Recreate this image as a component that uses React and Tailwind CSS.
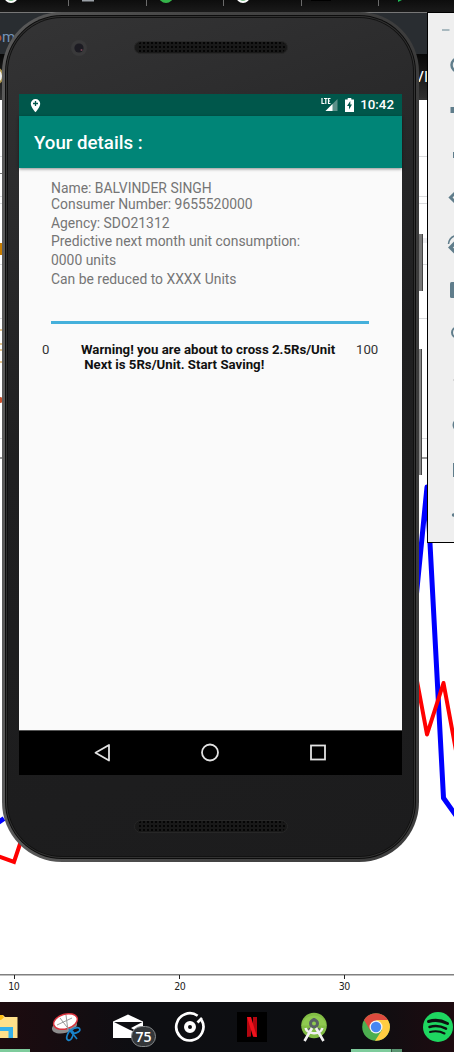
import React from "react";

function BrowserTabs() {
  return (
    <div className="h-[13px] shrink-0 bg-linear-to-b from-[#0d0d0d] to-[#1b1b1b]">
      <svg width="454" height="13" viewBox="0 0 454 13" className="block">
        <circle cx="11" cy="-4" r="7" fill="#fff" />
        <circle cx="11" cy="-4" r="5" fill="#7cc08a" />
        <rect x="82" y="0" width="12" height="1.5" fill="#9aa0a6" />
        <circle cx="166" cy="-4.500" r="7.500" fill="#35b44a" />
        <circle cx="243" cy="-4" r="7" fill="#fff" />
        <circle cx="243" cy="-4" r="5" fill="#7cc08a" />
        <rect x="311" y="0" width="20" height="1" fill="#000" />
        <path d="M398 0h4l-4 2z" fill="#1db954" />
        <path d="M68.500 0v6M146.500 0v6M223.500 0v6M301.500 0v6M378.500 0v6" stroke="#6b6b6b" />
        <path d="M0 12.500H454" stroke="#777" />
      </svg>
    </div>
  );
}

function ChartArea() {
  return (
    <svg width="454" height="902" viewBox="0 100 454 902" className="block shrink-0 bg-white">
      <g fill="none">
        <path d="M0 156.500H454M0 196.500H454M0 203.500H454M0 318.500H454M0 438.500H454M0 264.500H454" stroke="#d9dadc" />
        <path d="M0 173.500H3" stroke="#777" />
        <path d="M420 240.500h8" stroke="#ededf0" strokeWidth="5" />
        <path d="M0 458H454" stroke="#777" strokeWidth="1.500" />
        <path d="M-10 828L4 818.500" stroke="#00f" strokeWidth="5" />
        <path d="M-8 854L14 862L22 838" stroke="#f00" strokeWidth="4" />
        <path d="M410 660L427 487L443.500 798L462 824" stroke="#00f" strokeWidth="5" strokeLinejoin="round" />
        <path d="M412 654L427 734.500L443.500 683L462 783" stroke="#f00" strokeWidth="4" strokeLinejoin="round" />
        <path d="M0 974.700H454" stroke="#808080" strokeWidth="1.600" />
        <path d="M14.500 975V979M179.500 975V979M344.500 975V979" stroke="#222" />
      </g>
      <rect x="0" y="243" width="3" height="12" fill="#c77c00" />
      <path d="M0 330h2M0 344h2M0 350h2M0 362h2" stroke="#c98b20" />
      <circle cx="0" cy="400" r="3" fill="#c7502e" />
      <g fontFamily="DejaVu Sans Condensed, DejaVu Sans, sans-serif" fontSize="10.500" fill="#222" textAnchor="middle">
        <text x="14" y="990" textLength="11.500">10</text>
        <text x="180" y="990" textLength="11.500">20</text>
        <text x="344.500" y="990" textLength="11.500">30</text>
      </g>
    </svg>
  );
}

function Taskbar() {
  return (
    <svg width="454" height="50" viewBox="0 1002 454 50" className="block shrink-0">
      <defs>
        <linearGradient id="task">
          <stop offset="0" stopColor="#1d0b0f" />
          <stop offset=".3" stopColor="#0d0e12" />
          <stop offset=".8" stopColor="#0d0e11" />
          <stop offset="1" stopColor="#1e0b10" />
        </linearGradient>
      </defs>
      <rect y="1002" width="454" height="50" fill="url(#task)" />
      <rect y="1049" width="30" height="3" fill="#7ecb9c" />
      <rect x="351" y="1049" width="40" height="3" fill="#7ecb9c" />
      <rect x="391.500" y="1049" width="10.500" height="3" fill="#5a9572" />

      <path d="M-4 1015H3L5 1017H17.500V1038H-4Z" fill="#ffe08a" />
      <path d="M-2 1015H2.500L4 1017.500L1 1020H-2Z" fill="#fbbd14" />
      <path d="M-4 1027H13V1038H8.500V1031H-4Z" fill="#35b1ea" />

      <g>
        <ellipse cx="64.500" cy="1026.500" rx="12.800" ry="6.500" transform="rotate(-14 64.500 1026.500)" fill="#8d8d8d" />
        <ellipse cx="65.500" cy="1021.500" rx="12.200" ry="7.300" transform="rotate(-17 65.500 1021.500)" fill="#fff" stroke="#d8323c" strokeWidth="1.500" />
        <path d="M60 1018L70 1031M66 1015L68 1031M57 1025L72 1018" stroke="#999" strokeWidth="1" />
        <ellipse cx="75.500" cy="1030.500" rx="4.500" ry="2.500" transform="rotate(-18 75.500 1030.500)" fill="none" stroke="#1983ca" strokeWidth="1.700" />
        <ellipse cx="70" cy="1035.500" rx="2.700" ry="5" transform="rotate(22 70 1035.500)" fill="none" stroke="#1983ca" strokeWidth="1.700" />
        <path d="M69 1029L77 1039" stroke="#1983ca" strokeWidth="1.600" />
      </g>

      <path d="M113 1021.500L128 1014.500L143 1021.500V1038H113Z" fill="#fff" />
      <path d="M114 1022H142.500L131 1028L141 1034L130 1030Z" fill="#0d0e12" />
      <rect x="131.500" y="1026.500" width="24" height="20" rx="10" fill="#34373a" stroke="#85898b" />
      <text x="143.500" y="1041.500" fill="#fff" fontFamily="Open Sans, sans-serif" fontWeight="600" fontSize="14" textAnchor="middle">75</text>

      <g fill="none" stroke="#fff">
        <path d="M200.500 1018.500A13.600 13.600 0 1 1 196 1014.800" strokeWidth="2.700" transform="rotate(8 190 1027)" />
        <circle cx="190" cy="1027" r="4" strokeWidth="4" />
        <path d="M197.500 1022.500L202 1018" strokeWidth="2.600" />
      </g>

      <rect x="237" y="1012" width="30" height="30" fill="#000" />
      <path d="M247 1017H251V1036.500L247 1037ZM253 1017H257V1037L253 1036.500Z" fill="#b1060f" />
      <path d="M247 1017H251L257 1037L253 1036.500Z" fill="#f0121d" />

      <circle cx="314" cy="1025.500" r="12.800" fill="#82bd45" />
      <path d="M301.500 1025.500A12.800 12.800 0 0 1 326.500 1025.500Z" fill="#8fca50" />
      <circle cx="314" cy="1023.500" r="3.500" fill="none" stroke="#596165" strokeWidth="3" />
      <path d="M314 1018V1021M310 1028L308 1033M318 1028L320 1033" stroke="#596165" strokeWidth="2.500" />
      <path d="M312 1028L304.500 1041M316 1028L323.500 1041" stroke="#f2f2f2" strokeWidth="2.600" />
      <path d="M305.500 1028C307 1034 320 1036 322.500 1028" fill="none" stroke="#f2f2f2" strokeWidth="2.400" />

      <circle cx="376" cy="1027" r="13.800" fill="#4caf50" />
      <path d="M376 1027L364.050 1020.100A13.800 13.800 0 0 1 387.950 1020.100Z" fill="#dd4b3e" />
      <path d="M364.050 1020.100L370 1030L376 1020.100Z" fill="#dd4b3e" />
      <path d="M376 1020.100H387.950A13.800 13.800 0 0 1 375 1040.800L382 1030Z" fill="#ffcd42" />
      <circle cx="376" cy="1027" r="6.500" fill="#f5f5f5" />
      <circle cx="376" cy="1027" r="5.200" fill="#4587f3" />

      <circle cx="438" cy="1027" r="15" fill="#1ed760" />
      <g fill="none" stroke="#0d1110" strokeLinecap="round">
        <path d="M428.500 1021.500Q438 1018.500 447.500 1023.500" strokeWidth="3" />
        <path d="M429.500 1027Q438 1024.500 446 1028.700" strokeWidth="2.500" />
        <path d="M430 1032Q438 1030 444.500 1033.500" strokeWidth="2" />
      </g>
    </svg>
  );
}

function Speaker() {
  return (
    <svg width="154" height="13" viewBox="0 0 154 13" className="block shrink-0">
      <defs>
        <pattern id="mesh" width="4" height="4" patternUnits="userSpaceOnUse">
          <rect width="2" height="2" x="1" y="1" fill="#050505" />
        </pattern>
      </defs>
      <rect x=".5" y=".5" width="153" height="12" rx="6" fill="#191919" stroke="#272727" />
      <rect x="3" y="1" width="148" height="11" rx="5" fill="url(#mesh)" />
    </svg>
  );
}

function StatusBar() {
  return (
    <div className="flex h-[22px] shrink-0 items-center justify-between bg-[#00574b] pr-[8px] pl-[11px]">
      <svg width="11" height="15" viewBox="0 0 11 15">
        <path d="M5.500 1A4.700 4.700 0 0 0 .8 5.700C.8 9 5.500 14.200 5.500 14.200S10.200 9 10.200 5.700A4.700 4.700 0 0 0 5.500 1Z" fill="#fff" />
        <path d="M5.500 3V8M3 5.500H8" stroke="#00574b" strokeWidth="1.300" />
      </svg>
      <div className="flex items-center">
        <svg width="17" height="14" viewBox="0 0 17 14" className="mr-[7px]">
          <path d="M16.500 1V13H4.500Z" fill="#5c918a" />
          <path d="M11.500 6V13H4.500Z" fill="#fff" />
          <path d="M1 0V5.500H3.500M3 .5H6.500M4.800 .5V6M9.500 .5H7.500V5.500H9.500M7.500 3H9" stroke="#fff" strokeWidth="1.200" fill="none" />
        </svg>
        <svg width="9" height="14" viewBox="0 0 9 14" className="mr-[6px]">
          <path d="M2.700 0H6.300V1.500H9V14H0V1.500H2.700Z" fill="#fff" />
          <path d="M5.300 3L2 8H4V11.500L7 6.500H5.300Z" fill="#00574b" />
        </svg>
        <span className="text-[13.300px] leading-[22px] font-medium text-white">10:42</span>
      </div>
    </div>
  );
}

function AppScreen() {
  return (
    <div className="flex h-[681px] w-[383px] flex-col bg-[#fafafa] font-[Roboto,sans-serif]">
      <StatusBar />
      <div className="z-10 flex h-[52px] shrink-0 items-center bg-[#008577] pt-[2px] pl-[15px] shadow-[0_1px_3px_rgba(0,0,0,0.45)]">
        <h1 className="text-[18.700px] font-medium whitespace-pre text-white">Your details :</h1>
      </div>
      <div className="flex flex-col pt-[11px] pl-[32px] text-[13.900px] leading-[19px] whitespace-pre text-[#757575]">
        <div className="h-[16px] leading-[18px]">Name: BALVINDER SINGH</div>
        <div className="h-[19px] leading-[18px]">Consumer Number: 9655520000</div>
        <div className="h-[18px]">Agency: SDO21312</div>
        <div>Predictive next month unit consumption:</div>
        <div>0000 units</div>
        <div className="h-[18px]">Can be reduced to XXXX Units</div>
      </div>
      <div className="mt-[33px] ml-[32px] h-[3px] w-[318px] bg-[#45b0db]" />
      <div className="mt-[18px] flex h-8 text-[13.200px] leading-[15px] whitespace-pre text-[#333]">
        <div className="w-[39px] pl-[23px]">0</div>
        <div className="w-[298px] pl-[23px] text-[13.220px] font-bold text-[#111]">
          <div>Warning! you are about to cross 2.5Rs/Unit</div>
          <div> Next is 5Rs/Unit. Start Saving!</div>
        </div>
        <div>100</div>
      </div>
      <div className="grow" />
      <div className="h-[45px] shrink-0 border-t border-[#555] bg-black">
        <svg width="383" height="44" viewBox="0 0 383 44" className="block" fill="none" stroke="#e2e2e2" strokeWidth="1.800">
          <path d="M90 14V29.500L76.500 21.800Z" strokeLinejoin="round" />
          <circle cx="191" cy="21.500" r="8" />
          <rect x="292" y="14.500" width="14" height="14" />
        </svg>
      </div>
    </div>
  );
}

function Phone() {
  return (
    <div className="absolute top-[12px] left-[2px] flex">
      <div className="h-[850px] w-[417px] rounded-[60px] bg-linear-to-r from-[#5a5a5a] via-[#444] to-[#3c3c3c] p-[3px]">
        <div className="h-full rounded-[57px] bg-[#0d0d0d] p-[1px]">
          <div className="h-full rounded-[56px] bg-[#323232] p-[1px]">
            <div className="h-full rounded-[55px] bg-[#111] p-[1px]">
              <div className="flex h-full flex-col items-center rounded-[54px] bg-linear-160 from-[#343435] via-[#1f1f20] via-45% to-[#1c1c1d]">
                <div className="flex h-[76px] w-full shrink-0 items-start pt-[20px] pl-[62px]">
                  <svg width="18" height="18" viewBox="0 0 18 18" className="mt-[1px] mr-[46px]">
                    <circle cx="9" cy="9" r="8" fill="#39393a" />
                    <circle cx="9" cy="9" r="4.600" fill="#1c1b22" />
                    <circle cx="11.500" cy="11" r="1" fill="#744654" />
                  </svg>
                  <div className="pt-[3px]">
                    <Speaker />
                  </div>
                </div>
                <AppScreen />
                <div className="pt-[45px]">
                  <Speaker />
                </div>
              </div>
            </div>
          </div>
        </div>
      </div>
      <div className="flex flex-col pt-[222px]">
        <div className="h-[57px] w-[4px] border-r border-[#444] bg-[#777]" />
        <div className="mt-[58px] h-[126px] w-[3px] border-r border-[#444] bg-[#888]" />
      </div>
    </div>
  );
}

function EmulatorToolbar() {
  return (
    <div className="absolute top-[12px] right-0 h-[531px] w-[27px] border border-r-0 border-black bg-[#efefef]">
      <svg width="26" height="529" viewBox="428 13 26 529" className="block" fill="none" stroke="#607d8b">
        <path d="M442 30H449.500" stroke="#a9b9bf" strokeWidth="2" />
        <circle cx="458" cy="65" r="6.500" strokeWidth="2.500" />
        <rect x="450.500" y="107" width="6" height="6" fill="#607d8b" stroke="none" />
        <rect x="453" y="152" width="6" height="6" fill="#607d8b" stroke="none" />
        <path d="M457 191L450.500 197.500L457 204" strokeWidth="3" />
        <path d="M448.500 244C449 239 452 236.500 456 235.500" strokeWidth="1.500" />
        <path d="M457 241L450.500 247.500L457 254" strokeWidth="3.500" />
        <rect x="450" y="282" width="10" height="16" rx="1.500" fill="#607d8b" stroke="none" />
        <circle cx="457" cy="332.500" r="5" strokeWidth="2" />
        <path d="M453 380H454" stroke="#bbb" />
        <circle cx="459" cy="425" r="5.500" strokeWidth="2" />
        <path d="M460 464H454V476H460" strokeWidth="2" />
        <circle cx="453.500" cy="515" r="1.700" fill="#607d8b" stroke="none" />
      </svg>
    </div>
  );
}

export default function App() {
  return (
    <div className="relative flex h-[1052px] w-[454px] flex-col overflow-hidden bg-white">
      <BrowserTabs />
      <div className="flex h-[41px] shrink-0 items-start bg-[#292d31] pt-[14px] font-[Roboto,sans-serif] text-[15px] leading-5 text-[#7394b8]">
        <svg width="2" height="20" viewBox="0 0 2 20">
          <circle cx="-2" cy="11" r="3.500" fill="#b45532" />
        </svg>
        <span>m</span>
      </div>
      <div className="flex h-[46px] shrink-0 justify-between border-b-2 border-[#333] bg-linear-to-b from-[#080808] to-[#2f2f2f] pt-[13px] pr-[26px] font-[Roboto,sans-serif] text-[15px] leading-5 text-white">
        <svg width="4" height="18" viewBox="0 0 4 18">
          <circle cx="-5" cy="9" r="8" fill="#eee" stroke="#ad9750" strokeWidth="2" />
        </svg>
        <span>VI</span>
      </div>
      <ChartArea />
      <Taskbar />
      <Phone />
      <EmulatorToolbar />
    </div>
  );
}
